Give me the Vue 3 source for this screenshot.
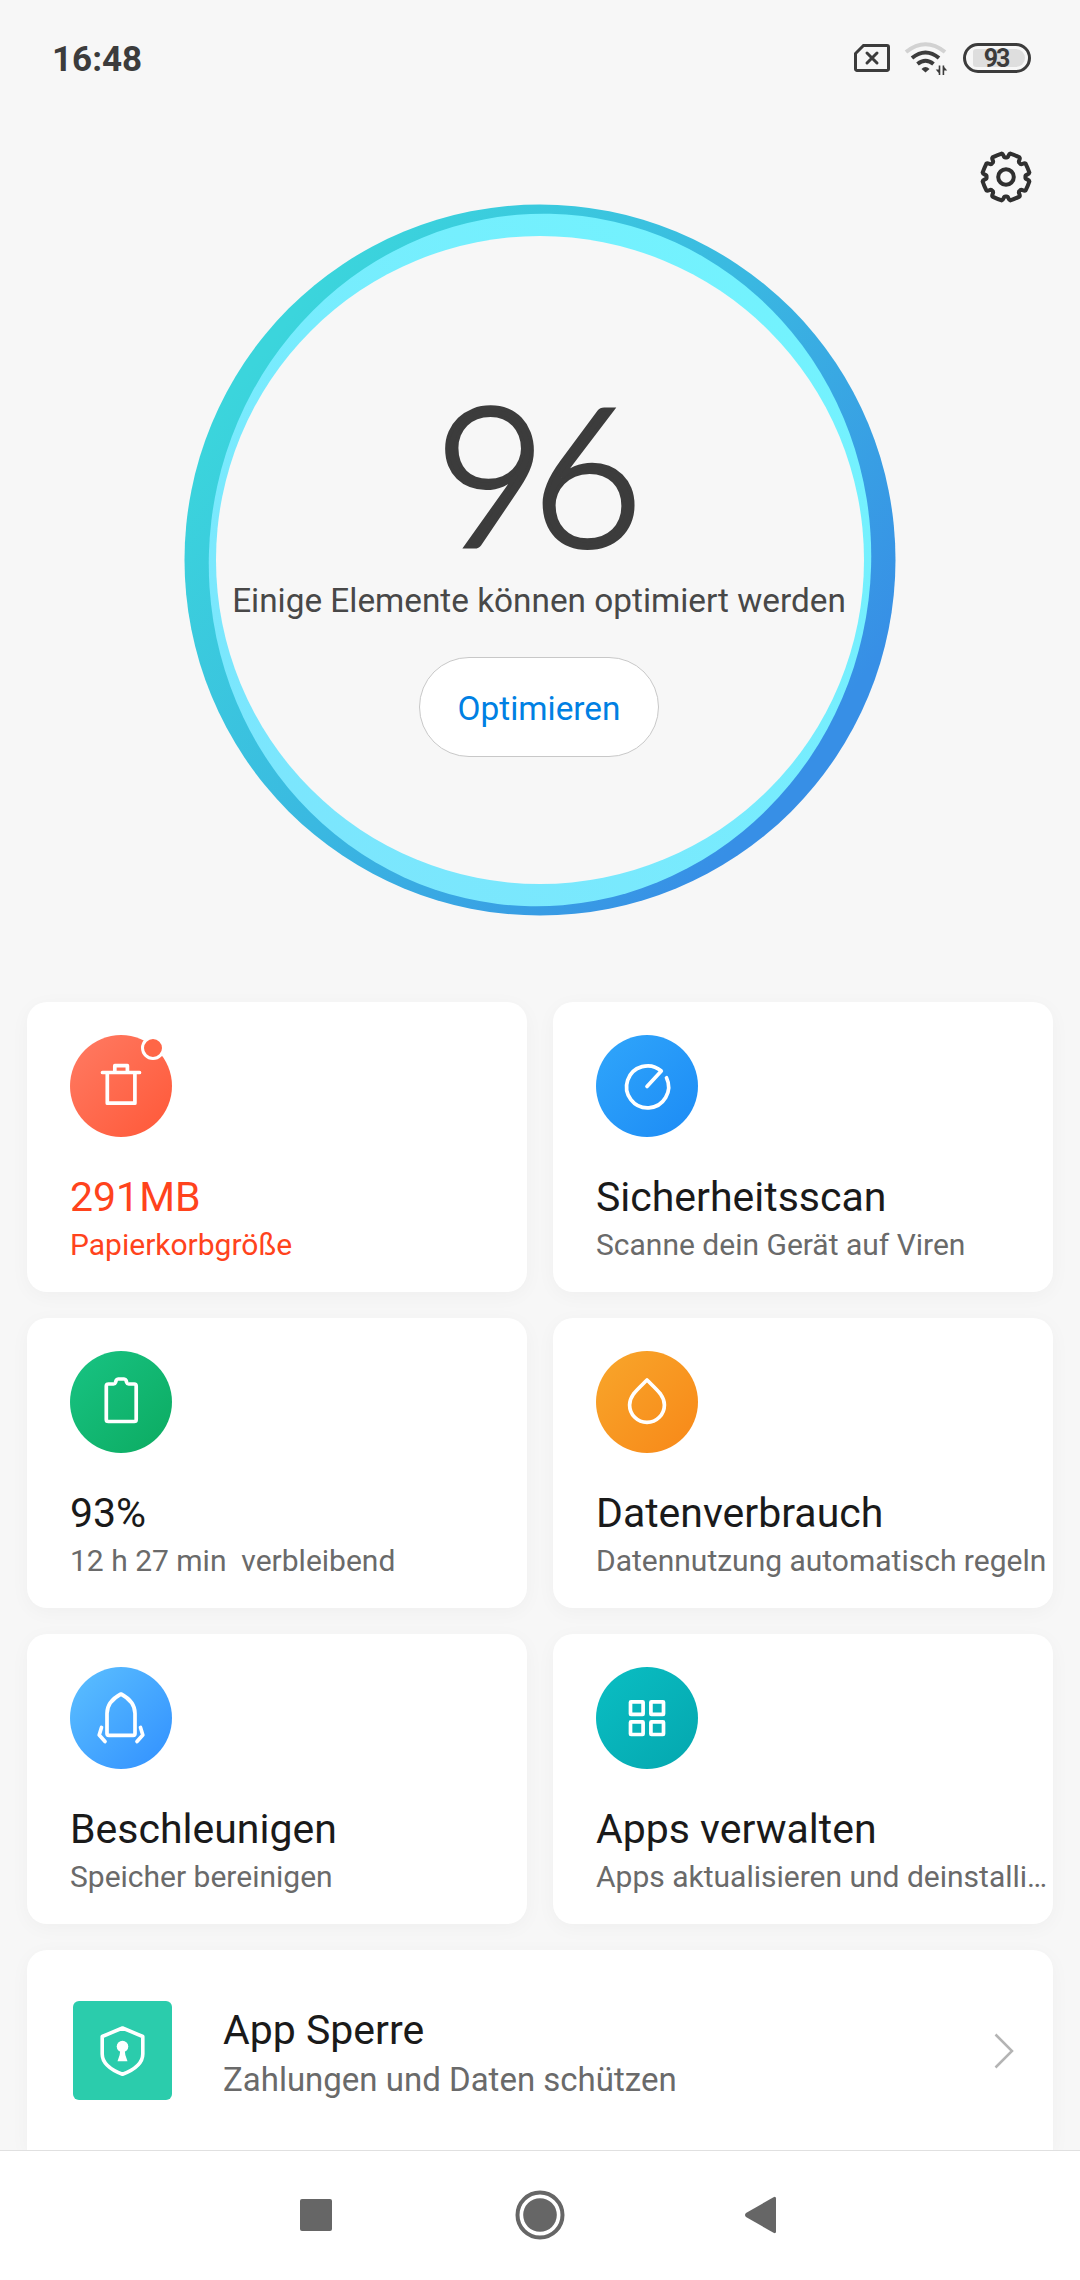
<script setup>
import { ref } from "vue";

const score = ref(96);
const battery = ref(93);

const cards = [
  {
    id: "cleaner",
    title: "291MB",
    text: "Papierkorbgröße",
    alert: true,
  },
  {
    id: "scan",
    title: "Sicherheitsscan",
    text: "Scanne dein Gerät auf Viren",
  },
  {
    id: "battery",
    title: "93%",
    text: "12 h 27 min  verbleibend",
  },
  {
    id: "data",
    title: "Datenverbrauch",
    text: "Datennutzung automatisch regeln",
  },
  {
    id: "boost",
    title: "Beschleunigen",
    text: "Speicher bereinigen",
  },
  {
    id: "apps",
    title: "Apps verwalten",
    text: "Apps aktualisieren und deinstalli…",
  },
];

// gear outline: 8 flat teeth joined by soft notches
const point = (deg, r) => {
  const a = (deg * Math.PI) / 180;
  return `${(26 + r * Math.cos(a)).toFixed(2)} ${(26 + r * Math.sin(a)).toFixed(2)}`;
};

const gearPath = () => {
  let d = `M${point(0, 19.5)}`;
  for (let i = 0; i < 8; i++) {
    const c = i * 45 + 22.5;
    d += `C${point(c - 13, 19)} ${point(c - 18, 23.2)} ${point(c - 12, 23.8)}`;
    d += `Q${point(c, 23.6)} ${point(c + 12, 23.8)}`;
    d += `C${point(c + 18, 23.2)} ${point(c + 13, 19)} ${point(c + 22.5, 19.5)}`;
  }
  return d + "Z";
};
</script>

<template>
  <div class="screen">
    <header class="status-bar">
      <span class="time">16:48</span>
      <div class="status-icons">
        <svg class="sim" width="36" height="28" viewBox="0 0 36 28">
          <path
            d="M9.5 1.5H33a1.5 1.5 0 0 1 1.5 1.5v22a1.5 1.5 0 0 1-1.5 1.5H3A1.5 1.5 0 0 1 1.5 25V9.5z"
          />
          <path d="M13 9l10 10M23 9l-10 10" />
        </svg>
        <svg class="wifi" width="44" height="34" viewBox="0 0 44 34">
          <path class="weak" d="M2 11Q21.500 -4.500 41 11" />
          <path d="M8 17Q21.500 6 35 17" />
          <path d="M13.500 23Q21.500 16.500 29.500 23" />
          <path class="dot" d="M17.500 28q4-4 8 0l-4 3.500z" />
          <path
            class="dot"
            d="M34.700 24.500h1.600V34h-1.600v-2l-3-3.500h3zM38.600 34v-9.500h1.600v1.500l3 3.500h-3V34z"
          />
        </svg>
        <div class="battery">
          <span>{{ battery }}</span>
        </div>
      </div>
    </header>

    <main class="content">
      <div class="toolbar">
        <svg class="gear" width="52" height="52" viewBox="0 0 52 52">
          <path :d="gearPath()" />
          <circle cx="26" cy="26" r="7.800" />
        </svg>
      </div>

      <section class="hero">
        <svg class="ring" width="712" height="712" viewBox="0 0 712 712">
          <defs>
            <linearGradient id="ringOuter" x1="0.1" y1="0.22" x2="0.85" y2="0.8">
              <stop offset="0" stop-color="#3bd5dc" />
              <stop offset="0.5" stop-color="#3ab8e1" />
              <stop offset="1" stop-color="#378fe6" />
            </linearGradient>
            <linearGradient id="ringInner" x1="0.8" y1="0.1" x2="0.2" y2="0.9">
              <stop offset="0" stop-color="#73f2fe" />
              <stop offset="1" stop-color="#7be6fd" />
            </linearGradient>
          </defs>
          <circle cx="356" cy="356" r="355.500" fill="url(#ringOuter)" />
          <ellipse
            cx="356"
            cy="356"
            rx="331"
            ry="346.500"
            fill="url(#ringInner)"
            transform="rotate(7 356 356)"
          />
          <circle cx="356" cy="356" r="324" fill="#f7f7f7" />
        </svg>
        <div class="summary">
          <div class="score">{{ score }}</div>
          <p>Einige Elemente können optimiert werden</p>
          <button type="button">Optimieren</button>
        </div>
      </section>

      <section class="cards">
        <article
          v-for="card in cards"
          :key="card.id"
          class="card"
          :class="{ 'is-alert': card.alert }"
        >
          <div class="icon" :class="card.id">
            <svg width="102" height="102" viewBox="0 0 102 102">
              <template v-if="card.id === 'cleaner'">
                <path d="M32.500 37.500h37M37.300 38v30.200h27.600V38M44.800 37v-6.300h12.600V37" />
              </template>
              <template v-else-if="card.id === 'scan'">
                <path d="M51 51.500L65.300 36A21 21 0 1 0 70.500 42.800" />
              </template>
              <template v-else-if="card.id === 'battery'">
                <path
                  d="M38 33h5.500q1.500 0 2-1.500l.6-2q.6-1.500 2-1.500h6q1.400 0 2 1.500l.6 2q.5 1.500 2 1.500H64.200q2 0 2 2v33.500q0 2-2 2H38.300q-2 0-2-2V35q0-2 2-2z"
                />
              </template>
              <template v-else-if="card.id === 'data'">
                <path
                  d="M51 29C46 34 41 38.500 37.500 43C35 46.500 33.600 49.500 33.600 54A17.400 17.400 0 0 0 68.400 54C68.400 49.500 67 46.500 64.500 43C61 38.500 56 34 51 29z"
                />
              </template>
              <template v-else-if="card.id === 'boost'">
                <path
                  d="M51 27Q37 34.500 37 46.500V66.500q0 1.800 1.800 1.800h24.400q1.800 0 1.800-1.800V46.500Q65 34.500 51 27z"
                />
                <path d="M31.500 60.500l-2.300 7.500 5.800 6.500M70.500 60.500l2.300 7.500-5.800 6.500" />
              </template>
              <template v-else>
                <rect x="34.500" y="34.800" width="12.600" height="12.600" rx="0.500" />
                <rect x="54.900" y="34.800" width="12.600" height="12.600" rx="0.500" />
                <rect x="34.500" y="54.900" width="12.600" height="12.600" rx="0.500" />
                <rect x="54.900" y="54.900" width="12.600" height="12.600" rx="0.500" />
              </template>
            </svg>
            <i v-if="card.alert" class="badge"></i>
          </div>
          <h2>{{ card.title }}</h2>
          <p>{{ card.text }}</p>
        </article>
      </section>

      <section class="lock-row">
        <svg class="lock-icon" width="99" height="99" viewBox="0 0 99 99">
          <rect width="99" height="99" rx="6" />
          <path
            class="shield"
            d="M49.500 27L69.800 35.500V53Q69.800 65.500 49.500 73.300Q29.200 65.500 29.200 53V35.500z"
          />
          <circle class="key" cx="49.500" cy="45.500" r="5.800" />
          <path class="key" d="M47.300 49h4.400q0 5 2.800 11.300h-10q2.800-6.300 2.800-11.300z" />
        </svg>
        <div class="lock-text">
          <h2>App Sperre</h2>
          <p>Zahlungen und Daten schützen</p>
        </div>
        <svg class="chevron" width="20" height="36" viewBox="0 0 20 36">
          <path d="M1.500 1.500L18 18L1.500 34.500" />
        </svg>
      </section>
    </main>

    <nav class="nav-bar">
      <svg class="recents" width="32" height="32" viewBox="0 0 32 32">
        <rect width="32" height="32" rx="2" />
      </svg>
      <svg width="50" height="50" viewBox="0 0 50 50">
        <circle class="outline" cx="25" cy="25" r="22.500" />
        <circle cx="25" cy="25" r="16.800" />
      </svg>
      <svg width="32" height="38" viewBox="0 0 32 38">
        <path d="M1 17L28.500 1.200Q31 0 31 2.500V35.500Q31 38 28.500 36.800L1 21Q-1 19 1 17z" />
      </svg>
    </nav>
  </div>
</template>

<style>
body {
  margin: 0;
  background-color: #f7f7f7;
}
</style>

<style scoped>
h2,
p {
  margin: 0;
  font-weight: 400;
}

svg {
  display: block;
  flex-shrink: 0;
}

.screen {
  display: flex;
  flex-direction: column;
  width: 1080px;
  height: 2280px;
  overflow: hidden;
  background-color: #f7f7f7;
  font-family: Roboto, "Liberation Sans", sans-serif;
}

.status-bar {
  display: flex;
  justify-content: space-between;
  align-items: center;
  height: 116px;
  padding: 0 49px 0 52px;
  box-sizing: border-box;
}

.time {
  padding-top: 3px;
  font-size: 35px;
  font-weight: 700;
  line-height: 40px;
  color: #3c3c3c;
}

.status-icons {
  display: flex;
  align-items: center;
}

.sim {
  fill: none;
  stroke: #3c3c3c;
  stroke-width: 3;
  stroke-linecap: round;
}

.wifi {
  margin: 0 15px 0 14px;
  overflow: visible;
  fill: none;
  stroke: #3c3c3c;
  stroke-width: 4;
}

.wifi .weak {
  stroke: #d2d2d2;
}

.wifi .dot {
  fill: #3c3c3c;
  stroke: none;
}

.battery {
  width: 68px;
  height: 30px;
  box-sizing: border-box;
  padding: 3px 3px 3px 7px;
  border: 3px solid #3c3c3c;
  border-radius: 15px;
}

.battery span {
  display: block;
  height: 18px;
  padding-right: 6px;
  border-radius: 3px 9px 9px 3px;
  background-color: #dedede;
  color: #3c3c3c;
  font-size: 25px;
  font-weight: 700;
  line-height: 20px;
  letter-spacing: -2px;
  text-align: center;
}

.content {
  flex: 1;
  min-height: 0;
  overflow: hidden;
}

.toolbar {
  display: flex;
  justify-content: flex-end;
  height: 88px;
  padding: 35px 48px 0 0;
  box-sizing: border-box;
}

.gear {
  fill: none;
  stroke: #303030;
  stroke-width: 4;
  stroke-linejoin: round;
}

.hero {
  display: grid;
  justify-content: center;
  height: 798px;
}

.ring,
.summary {
  grid-area: 1 / 1;
}

.summary {
  display: flex;
  flex-direction: column;
  align-items: center;
  padding: 179px 2px 0 0;
  z-index: 1;
}

.score {
  height: 176px;
  margin-right: 15px;
  font-family: Lato, sans-serif;
  font-size: 193px;
  font-weight: 300;
  line-height: 177px;
  letter-spacing: -15px;
  color: #3c3c3c;
  -webkit-text-stroke: 4px #3c3c3c;
}

.summary p {
  height: 40px;
  margin-top: 22px;
  font-size: 33.35px;
  line-height: 40px;
  color: #484848;
  white-space: nowrap;
}

.summary button {
  width: 240px;
  height: 100px;
  margin-top: 36px;
  padding: 2px 0 0;
  border: 1px solid #c8c8c8;
  border-radius: 50px;
  background-color: white;
  color: #0080e3;
  font-family: inherit;
  font-size: 33.4px;
}

.cards {
  display: grid;
  grid-template-columns: 500px 500px;
  gap: 26px;
  padding: 0 27px;
}

.card {
  height: 290px;
  box-sizing: border-box;
  padding: 33px 0 0 43px;
  border-radius: 20px;
  background-color: white;
  box-shadow: 0 4px 20px rgba(0, 0, 0, 0.035);
}

.icon {
  position: relative;
  width: 102px;
  height: 102px;
  border-radius: 50%;
}

.icon svg {
  fill: none;
  stroke: white;
  stroke-width: 3.7;
  stroke-linecap: round;
  stroke-linejoin: round;
}

.cleaner {
  background: linear-gradient(135deg, #ff7b63, #ff5838);
}

.scan {
  background: linear-gradient(135deg, #30a6fb, #1c8bf5);
}

.icon.battery {
  border: 0;
  padding: 0;
  background: linear-gradient(135deg, #18c383, #0cab61);
}

.data {
  background: linear-gradient(135deg, #f8a62b, #f88818);
}

.boost {
  background: linear-gradient(135deg, #5cc0ff, #3190ff);
}

.apps {
  background: linear-gradient(135deg, #0abec3, #04a7af);
}

.badge {
  position: absolute;
  top: 0.5px;
  left: 71px;
  width: 18px;
  height: 18px;
  border: 3.5px solid white;
  border-radius: 50%;
  background-color: #ff6647;
}

.card h2 {
  margin-top: 35px;
  font-size: 41px;
  line-height: 50px;
  color: #1a1a1a;
}

.card p {
  font-size: 30px;
  line-height: 46px;
  color: #6a6a6a;
  white-space: pre;
}

.card.is-alert h2,
.card.is-alert p {
  color: #ff431c;
}

.lock-row {
  display: flex;
  align-items: center;
  height: 201px;
  margin: 26px 27px 0;
  padding: 0 39px 0 46px;
  border-radius: 20px 20px 0 0;
  background-color: white;
  box-shadow: 0 4px 20px rgba(0, 0, 0, 0.035);
}

.lock-icon rect {
  fill: #2bccac;
}

.lock-icon .shield {
  fill: none;
  stroke: white;
  stroke-width: 3.6;
  stroke-linejoin: round;
}

.lock-icon .key {
  fill: white;
}

.lock-text {
  flex: 1;
  padding-top: 9px;
  margin-left: 51px;
}

.lock-text h2 {
  font-size: 41px;
  line-height: 50px;
  color: #1a1a1a;
}

.lock-text p {
  font-size: 33px;
  line-height: 50px;
  color: #6a6a6a;
}

.chevron {
  fill: none;
  stroke: #b4b4b4;
  stroke-width: 2.5;
}

.nav-bar {
  display: flex;
  justify-content: center;
  align-items: center;
  gap: 180px;
  height: 130px;
  padding: 0 3px 1px 0;
  box-sizing: border-box;
  border-top: 1px solid #e0e0e0;
  background-color: white;
}

.nav-bar svg {
  fill: #666;
}

.nav-bar .recents {
  margin-right: 3px;
}

.nav-bar .outline {
  fill: none;
  stroke: #666;
  stroke-width: 4;
}
</style>
